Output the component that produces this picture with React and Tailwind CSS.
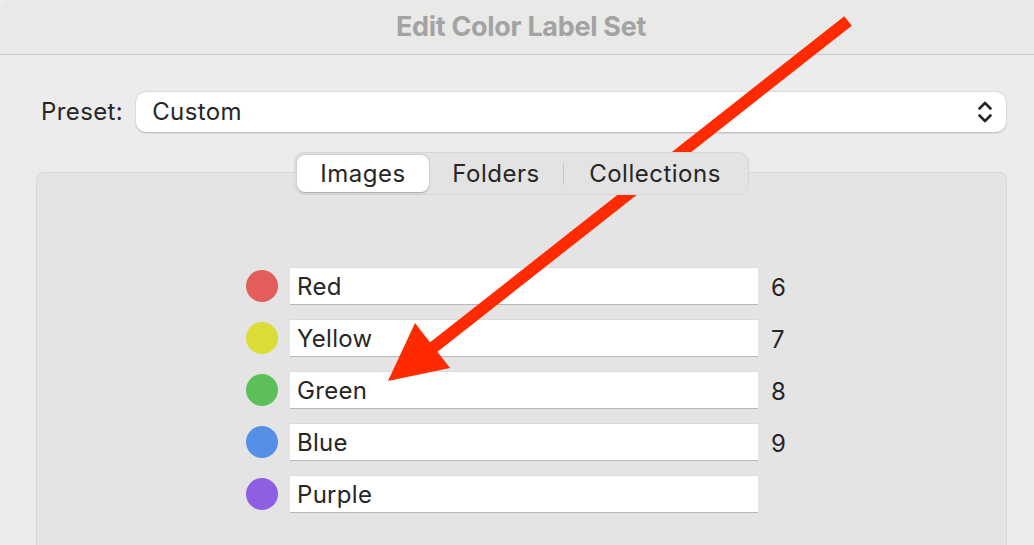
import React from "react";

const labels = [
    { name: "Red", color: "bg-[#e35d5b]", key: "6" },
    { name: "Yellow", color: "bg-[#dcdc37]", key: "7" },
    { name: "Green", color: "bg-[#5cbf5a]", key: "8" },
    { name: "Blue", color: "bg-[#5590e6]", key: "9" },
    { name: "Purple", color: "bg-[#8e5fe3]", key: "" },
];

const ChevronUpDown = () => (
    <svg width="16" height="24" viewBox="0 0 16 24" fill="none" stroke="#262626" strokeWidth="2.6" strokeLinecap="round" strokeLinejoin="round">
        <path d="M2.5 8.5 L8 3 L13.5 8.5" />
        <path d="M2.5 15.5 L8 21 L13.5 15.5" />
    </svg>
);

const Arrow = () => (
    <svg className="absolute left-0 top-0 pointer-events-none" width="1034" height="545" viewBox="0 0 1034 545">
        <line x1="848" y1="21" x2="430" y2="350" stroke="#ff2a00" strokeWidth="12" />
        <polygon points="388,381 415,323 450,368" fill="#ff2a00" />
    </svg>
);

export default function App() {
    return (
        <div className="relative w-[1034px] h-[545px] overflow-hidden bg-[#ececec] text-[#262626] font-['Inter','Liberation_Sans',sans-serif]">
            {/* title bar */}
            <div className="h-[55px] bg-[#e9e9e7] border-b border-[#c9c9c9] flex items-center justify-center rounded-tl-[10px]">
                <div className="ml-[8px] text-[27px] font-bold text-[#a3a3a3] tracking-[-0.3px]">Edit Color Label Set</div>
            </div>

            <div className="pl-[41px] pr-[28px] pt-[37px]">
                <div className="flex items-center gap-[13px] text-[24px] tracking-[0.4px]">
                    <div>Preset:</div>
                    <div className="flex-1 h-[40px] bg-white rounded-[10px] shadow-[0_0.5px_2px_rgba(0,0,0,0.25)] flex items-center justify-between pl-[16px] pr-[13px]">
                        <div>Custom</div>
                        <ChevronUpDown />
                    </div>
                </div>
            </div>

            <div className="mt-[20px] ml-[36px] mr-[27px] flex flex-col items-center">
                <div className="relative z-10 mb-[-23px] h-[43px] flex items-center bg-[#e3e3e3] border border-[#d6d6d6] rounded-[10px] p-[2px] text-[24px] tracking-[0.5px]">
                    <div className="h-full w-[132px] flex items-center justify-center bg-white rounded-[8px] shadow-[0_0.5px_2px_rgba(0,0,0,0.3)]">Images</div>
                    <div className="h-full w-[134px] flex items-center justify-center">Folders</div>
                    <div className="w-px h-[22px] bg-[#c6c6c6]"></div>
                    <div className="h-full w-[182px] flex items-center justify-center">Collections</div>
                </div>
                <div className="w-full h-[400px] bg-[#e4e4e4] border border-[#d8d8d8] rounded-[7px] pt-[94px] pl-[209px] flex flex-col gap-[14px]">
                    {labels.map((l) => (
                        <div key={l.name} className="flex items-center h-[38px] text-[24px] tracking-[0.3px]">
                            <div className={`w-[32px] h-[32px] rounded-full ${l.color}`}></div>
                            <div className="ml-[12px] w-[468px] h-[38px] bg-white border-t border-[#dadada] border-b-[1.5px] border-b-[#b8b8b8] flex items-center pl-[7px] pt-[2px]">
                                {l.name}
                            </div>
                            <div className="ml-[13px] pt-[4px]">{l.key}</div>
                        </div>
                    ))}
                </div>
            </div>

            <Arrow />
        </div>
    );
}
